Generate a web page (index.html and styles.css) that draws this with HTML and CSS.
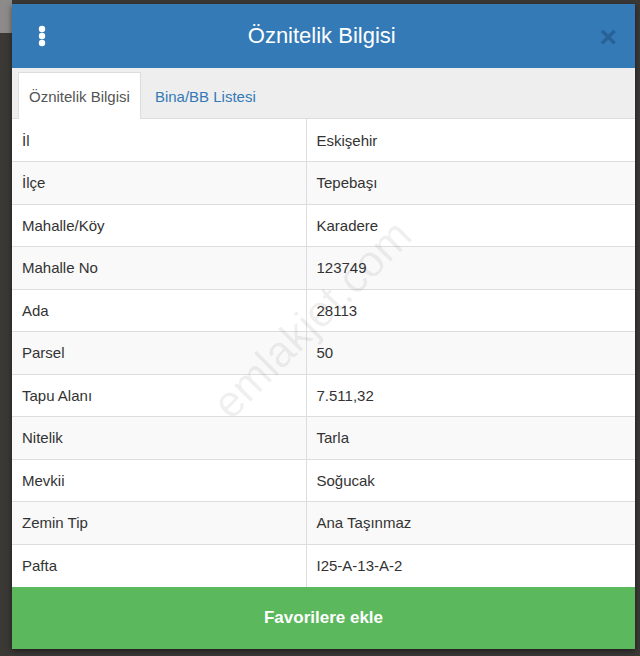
FILE: index.html
```html
<!DOCTYPE html>
<html lang="tr">
<head>
<meta charset="UTF-8">
<meta name="viewport" content="width=device-width, initial-scale=1.0">
<title>Öznitelik Bilgisi</title>
<link rel="stylesheet" href="styles.css">
</head>
<body>

<div class="modal">
    <div class="modal-header">
        <span class="menu-dots">
            <svg width="10" height="22" viewBox="0 0 10 22">
                <circle cx="5" cy="4" r="3.2" fill="#fff"/>
                <circle cx="5" cy="11" r="3.2" fill="#fff"/>
                <circle cx="5" cy="18" r="3.2" fill="#fff"/>
            </svg>
        </span>
        <h1>Öznitelik Bilgisi</h1>
        <span class="close">&times;</span>
    </div>

    <ul class="tabs">
        <li class="tab active">Öznitelik Bilgisi</li>
        <li class="tab">Bina/BB Listesi</li>
    </ul>

    <div class="table-wrap">
        <table id="infoTable">
            <tbody>
                <tr><td>İl</td><td>Eskişehir</td></tr>
                <tr><td>İlçe</td><td>Tepebaşı</td></tr>
                <tr><td>Mahalle/Köy</td><td>Karadere</td></tr>
                <tr><td>Mahalle No</td><td>123749</td></tr>
                <tr><td>Ada</td><td>28113</td></tr>
                <tr><td>Parsel</td><td>50</td></tr>
                <tr><td>Tapu Alanı</td><td>7.511,32</td></tr>
                <tr><td>Nitelik</td><td>Tarla</td></tr>
                <tr><td>Mevkii</td><td>Soğucak</td></tr>
                <tr><td>Zemin Tip</td><td>Ana Taşınmaz</td></tr>
                <tr><td>Pafta</td><td>I25-A-13-A-2</td></tr>
            </tbody>
        </table>
        <div class="watermark">emlakjet.com</div>
    </div>

    <button class="fav-btn">Favorilere ekle</button>
</div>

</body>
</html>
```

FILE: styles.css
```css
html, body {
    height: 100%;
}
body {
    font-family: "Liberation Sans", Arial, sans-serif;
    margin: 0;
    padding: 4px 5px 7px 12px;
    box-sizing: border-box;
    background-color: #3a3936;
    background-image: linear-gradient(180deg, #8c8b89 0, #8c8b89 33px, transparent 33px);
    background-size: 12px 100%;
    background-repeat: no-repeat;
}
.modal {
    width: 623px;
    height: 645px;
    background: #fff;
    display: flex;
    flex-direction: column;
    box-shadow: 0 2px 6px rgba(0, 0, 0, 0.5);
}
.modal-header {
    height: 64px;
    background: #337ab7;
    display: flex;
    align-items: center;
    padding: 0 18px 0 24px;
    flex-shrink: 0;
}
.menu-dots {
    width: 12px;
    display: flex;
    justify-content: center;
    margin-top: -1px;
}
.modal-header h1 {
    flex: 1;
    margin: 0;
    text-align: center;
    color: #fff;
    font-size: 22px;
    font-weight: normal;
    padding-right: 4px;
}
.close {
    color: #24598a;
    opacity: 0.75;
    font-size: 30px;
    font-weight: bold;
    line-height: 1;
    margin-top: 2px;
}
.tabs {
    list-style: none;
    margin: 0;
    padding: 4px 0 0 6px;
    height: 51px;
    box-sizing: border-box;
    background: #eee;
    display: flex;
    border-bottom: 1px solid #ddd;
    flex-shrink: 0;
}
.tab {
    padding: 0 14px 0 13px;
    font-size: 15px;
    color: #337ab7;
    display: flex;
    align-items: center;
    margin-bottom: -1px;
    border: 1px solid transparent;
    border-bottom: none;
}
.tab.active {
    background: #fff;
    color: #555;
    border-color: #ddd;
    padding: 0 10px;
}
.table-wrap {
    position: relative;
    overflow: hidden;
    flex-shrink: 0;
}
table {
    border-collapse: collapse;
    width: 100%;
}
td {
    height: 42.5px;
    padding: 0 10px;
    box-sizing: border-box;
    font-size: 15px;
    color: #333;
    border-top: 1px solid #ddd;
}
tr:first-child td {
    border-top: none;
}
td:first-child {
    width: 294px;
    border-right: 1px solid #ddd;
}
tr:nth-child(even) td {
    background: #f9f9f9;
}
.watermark {
    position: absolute;
    left: 300px;
    top: 200px;
    font-size: 44px;
    color: rgba(0, 0, 0, 0.07);
    white-space: nowrap;
    transform: translate(-50%, -50%) rotate(-45deg);
    pointer-events: none;
}
.fav-btn {
    flex: 1;
    border: none;
    background: #5cb85c;
    color: #fff;
    font-family: "Liberation Sans", Arial, sans-serif;
    font-size: 17px;
    font-weight: bold;
    cursor: pointer;
}
```
